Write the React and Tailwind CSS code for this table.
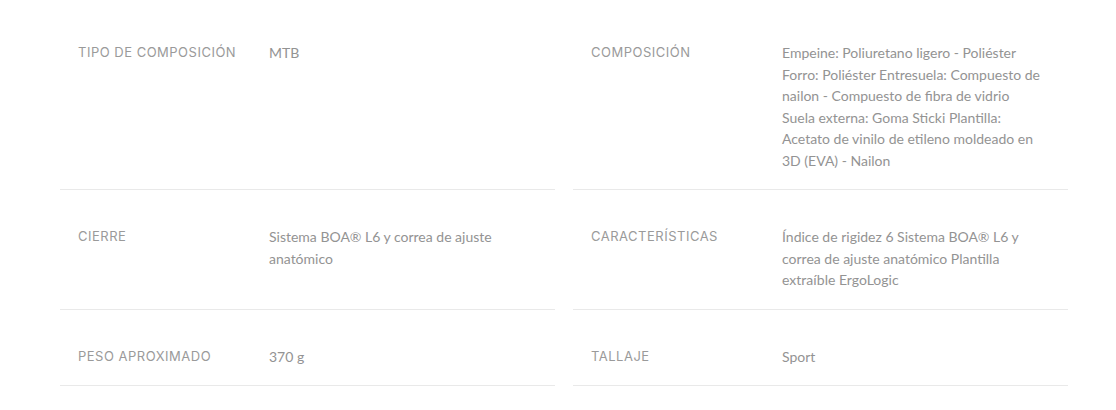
import React from "react";

const filas = [
    [
        { label: "Tipo de composición", value: "MTB" },
        {
            label: "Composición",
            value: "Empeine: Poliuretano ligero - Poliéster Forro: Poliéster Entresuela: Compuesto de nailon - Compuesto de fibra de vidrio Suela externa: Goma Sticki Plantilla: Acetato de vinilo de etileno moldeado en 3D (EVA) - Nailon",
        },
    ],
    [
        { label: "Cierre", value: "Sistema BOA® L6 y correa de ajuste anatómico" },
        {
            label: "Características",
            value: "Índice de rigidez 6 Sistema BOA® L6 y correa de ajuste anatómico Plantilla extraíble ErgoLogic",
        },
    ],
    [
        { label: "Peso aproximado", value: "370 g" },
        { label: "Tallaje", value: "Sport" },
    ],
];

function Celda({ label, value }) {
    return (
        <div className="flex items-start border-b border-[#e9e9e9] pl-[18px] pt-[36px] pb-[18px]">
            <div className="w-[191px] shrink-0 text-[13px] leading-[21.5px] uppercase tracking-[0.5px] text-[#9a9a9a] font-['Inter',sans-serif]">
                {label}
            </div>
            <div className="w-[261px] text-[14px] leading-[21.5px] text-[#939393] font-['Lato',sans-serif]">
                {value}
            </div>
        </div>
    );
}

export default function App() {
    return (
        <div className="w-[1116px] h-[410px] bg-white overflow-hidden pt-[6px]">
            <div className="grid grid-cols-[495px_495px] gap-x-[18px] ml-[60px]">
                {filas.map((fila) =>
                    fila.map((c) => <Celda key={c.label} label={c.label} value={c.value} />)
                )}
            </div>
        </div>
    );
}
